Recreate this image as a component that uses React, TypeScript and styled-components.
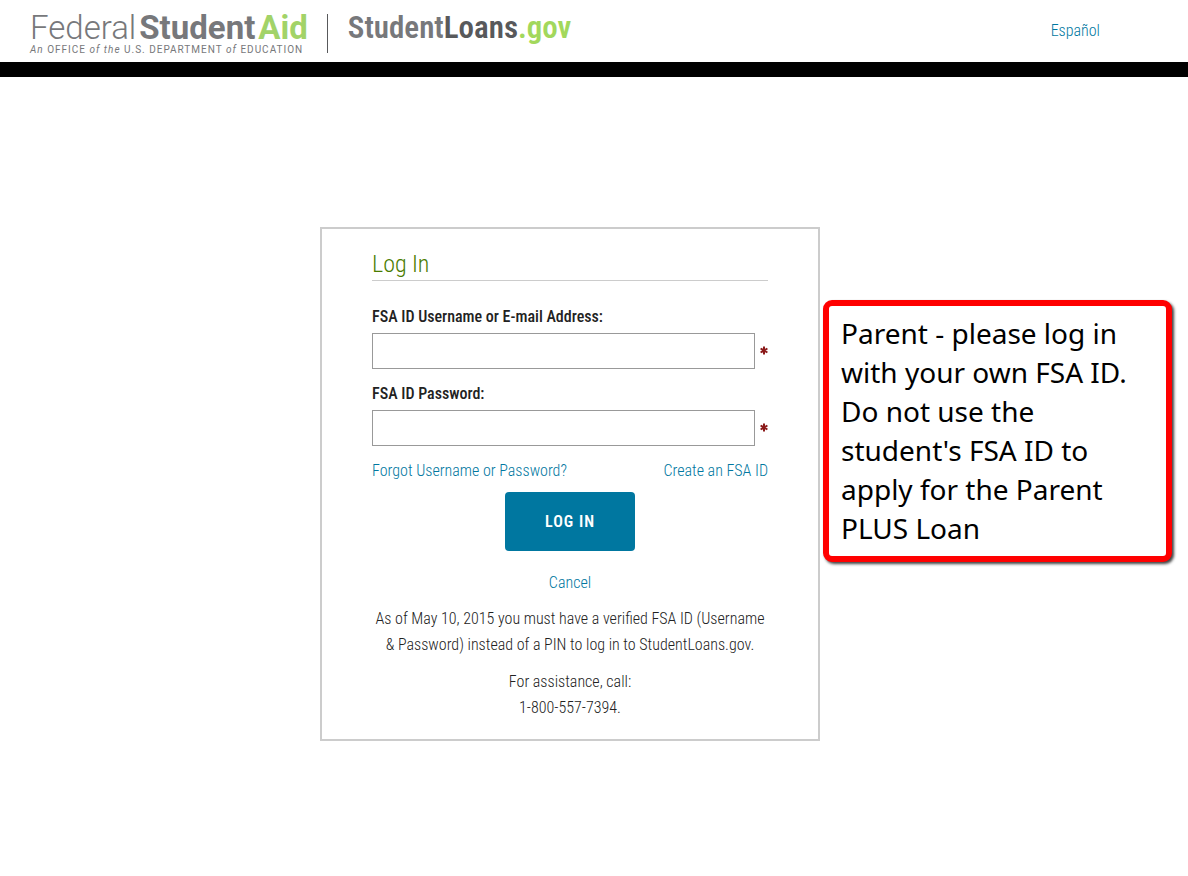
import React from 'react';
import styled, { createGlobalStyle } from 'styled-components';

const condensed = "'Roboto Condensed', Roboto, sans-serif";

const GlobalStyle = createGlobalStyle`
  *, *::before, *::after { box-sizing: border-box; }
  body {
    margin: 0;
    background: #fff;
    color: #222;
    font-family: ${condensed};
    font-size: 16px;
    font-weight: 300;
    line-height: 26px;
  }
`;

const Header = styled.header`
  display: flex;
  align-items: center;
  height: 77px;
  padding: 0 88px 0 30px;
  border-bottom: 15px solid #000;
`;

const AgencyLogo = styled.a`
  display: flex;
  flex-direction: column;
  padding: 3px 19px 0 0;
  color: #77787b;
  font-family: Roboto, sans-serif;
  text-decoration: none;
  white-space: nowrap;
`;

const AgencyName = styled.span`
  display: flex;
  gap: 3px;
  font-size: 33px;
  line-height: 34px;
`;

const Word = styled.span<{ $weight: number; $color?: string }>`
  font-weight: ${p => p.$weight};
  color: ${p => p.$color ?? 'inherit'};
`;

const Tagline = styled.span`
  font-size: 10px;
  font-weight: 400;
  line-height: 10px;
  letter-spacing: 1px;
`;

const SiteLogo = styled.a`
  height: 39px;
  margin-top: 4px;
  padding-left: 20px;
  border-left: 1px solid #58595b;
  color: #77787b;
  font-size: 31px;
  font-weight: 600;
  line-height: 28px;
  text-decoration: none;
  white-space: nowrap;
`;

const Link = styled.a`
  color: #0077a0;
  text-decoration: none;
  &:hover { text-decoration: underline; }
`;

const LanguageLink = styled(Link)`
  margin-left: auto;
`;

const Main = styled.main`
  display: grid;
  grid-template-columns: minmax(0, 1fr) minmax(0, 500px) 352px;
  align-items: start;
  padding: 150px 16px 135px 0;
`;

const Card = styled.form`
  grid-column: 2;
  display: flex;
  flex-direction: column;
  padding: 20px 50px 18px;
  border: 2px solid #ccc;
`;

const Title = styled.h1`
  margin: 0 0 23px;
  border-bottom: 1px solid #ccc;
  color: #4a7c00;
  font-size: 24px;
  font-weight: 300;
  line-height: 31px;
`;

const Field = styled.div`
  margin-bottom: 12px;
`;

const Label = styled.label`
  display: block;
  margin-bottom: 3px;
  font-weight: 500;
`;

const InputRow = styled.div`
  display: flex;
  align-items: center;
  gap: 5px;
`;

const Input = styled.input`
  flex: 1;
  min-width: 0;
  height: 36px;
  padding: 0 8px;
  border: 1px solid #999;
  background: #fff;
  font: inherit;
`;

const Required = styled.svg`
  width: 8px;
  height: 9px;
  margin-bottom: 2px;
`;

const LinkRow = styled.div`
  display: flex;
  justify-content: space-between;
  margin-bottom: 8px;
`;

const SubmitButton = styled.button`
  align-self: center;
  width: 130px;
  height: 59px;
  margin-bottom: 19px;
  border: 0;
  border-radius: 4px;
  background: #0077a0;
  color: #fff;
  font: inherit;
  font-weight: 600;
  letter-spacing: 1px;
`;

const CancelLink = styled(Link)`
  align-self: center;
`;

const Note = styled.p`
  margin: 10px 0 0;
  text-align: center;

  & + & { margin-top: 11px; }
`;

const Callout = styled.aside`
  margin: 73px 0 0 3px;
  padding: 8px 28px 8px 12px;
  border: 6px solid #f00;
  border-radius: 9px;
  background: #fff;
  box-shadow: 2px 2px 3px rgba(0, 0, 0, 0.75);
  color: #000;
  font-family: 'Noto Sans', sans-serif;
  font-size: 28px;
  font-weight: 400;
  line-height: 39px;
`;

function TextField({ id, label, type }: { id: string; label: string; type: string }) {
  return (
    <Field>
      <Label htmlFor={id}>{label}</Label>
      <InputRow>
        <Input id={id} name={id} type={type} required />
        <Required viewBox="0 0 8 9" aria-hidden="true">
          <path d="M4 0.5V8.5M0.6 2.5L7.4 6.5M7.4 2.5L0.6 6.5" stroke="#8b1a1a" strokeWidth="2" />
        </Required>
      </InputRow>
    </Field>
  );
}

export default function App() {
  return (
    <>
      <GlobalStyle />
      <Header>
        <AgencyLogo href="#">
          <AgencyName>
            <Word $weight={300}>Federal</Word>
            <Word $weight={700}>Student</Word>
            <Word $weight={700} $color="#a2d368">Aid</Word>
          </AgencyName>
          <Tagline>
            <i>An</i> OFFICE <i>of the</i> U.S. DEPARTMENT <i>of</i> EDUCATION
          </Tagline>
        </AgencyLogo>
        <SiteLogo href="#">
          Student
          <Word $weight={600} $color="#58595b">Loans</Word>
          <Word $weight={600} $color="#a2d85c">.gov</Word>
        </SiteLogo>
        <LanguageLink href="#">Español</LanguageLink>
      </Header>
      <Main>
        <Card onSubmit={e => e.preventDefault()}>
          <Title>Log In</Title>
          <TextField id="username" label="FSA ID Username or E-mail Address:" type="text" />
          <TextField id="password" label="FSA ID Password:" type="password" />
          <LinkRow>
            <Link href="#">Forgot Username or Password?</Link>
            <Link href="#">Create an FSA ID</Link>
          </LinkRow>
          <SubmitButton type="submit">LOG IN</SubmitButton>
          <CancelLink href="#">Cancel</CancelLink>
          <Note>
            As of May 10, 2015 you must have a verified FSA ID (Username &amp; Password) instead of a
            PIN to log in to StudentLoans.gov.
          </Note>
          <Note>
            For assistance, call:
            <br />
            1-800-557-7394.
          </Note>
        </Card>
        <Callout>
          Parent - please log in with your own FSA ID. Do not use the student's FSA ID to apply for
          the Parent PLUS Loan
        </Callout>
      </Main>
    </>
  );
}
